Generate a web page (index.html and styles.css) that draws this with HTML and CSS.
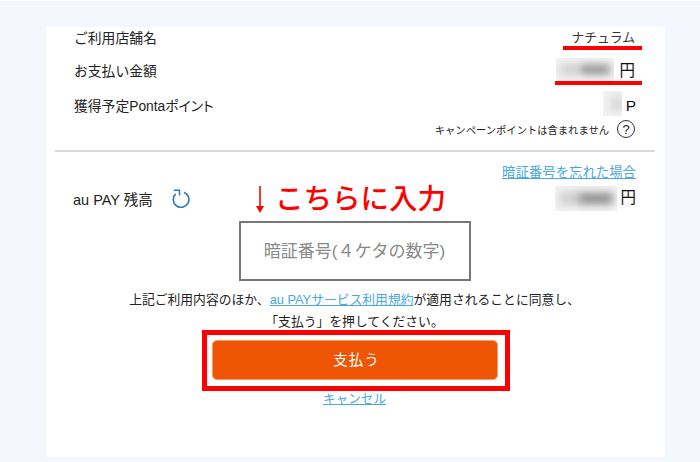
FILE: index.html
```html
<!DOCTYPE html>
<html lang="ja">
<head>
<meta charset="utf-8">
<title>au PAY</title>
<link rel="stylesheet" href="styles.css">
</head>
<body>
<main class="card">
  <section class="summary">
    <div class="row store">
      <span class="label">ご利用店舗名</span>
      <span class="value store-name">ナチュラム</span>
    </div>
    <div class="row amount">
      <span class="label">お支払い金額</span>
      <span class="value amount-value"><i class="blur blur-amount"></i><span class="unit">円</span></span>
    </div>
    <div class="row points">
      <span class="label points-label">獲得予定Pontaポイント</span>
      <span class="value"><i class="blur blur-points"></i><span class="unit unit-p">P</span></span>
    </div>
    <div class="note">
      <span>キャンペーンポイントは含まれません</span>
      <span class="help">?</span>
    </div>
  </section>
  <hr class="divider">
  <section class="payment">
    <div class="forgot"><a href="#">暗証番号を忘れた場合</a></div>
    <div class="balance">
      <div class="balance-left">
        <span class="balance-label">au PAY 残高</span>
        <svg class="refresh" viewBox="0 0 18 19" width="18" height="19" aria-hidden="true">
          <path d="M12 3.3A7.8 7.8 0 1 1 3.6 5" fill="none" stroke="#3b82b8" stroke-width="1.8"/>
          <path d="M1.8 1.4 L7.4 1 L7.6 6.4" fill="none" stroke="#3b82b8" stroke-width="1.6"/>
        </svg>
      </div>
      <div class="hint">
        <svg class="hint-arrow" viewBox="0 0 8 27" width="8" height="27" aria-hidden="true">
          <path d="M4 0V21" stroke="#f00" stroke-width="1.6"/>
          <path d="M0 20H8L4 27Z" fill="#f00"/>
        </svg>
        <span>こちらに入力</span>
      </div>
      <span class="value balance-value"><i class="blur blur-balance"></i><span class="unit">円</span></span>
    </div>
    <div class="pin">暗証番号(４ケタの数字)</div>
    <p class="consent">上記ご利用内容のほか、<a href="#">au PAYサービス利用規約</a>が適用されることに同意し、<br>「支払う」を押してください。</p>
    <div class="highlight"><button class="pay" type="button">支払う</button></div>
    <a class="cancel" href="#">キャンセル</a>
  </section>
</main>
</body>
</html>
```
FILE: styles.css
```css
* { box-sizing: border-box; }
html, body { margin: 0; height: 462px; overflow: hidden; }
body {
  background: #f4f7fe;
  border-top: 1px solid #fff;
  padding: 26px 35px 5px 46px;
  font-family: "Liberation Sans", "Noto Sans CJK JP", sans-serif;
  color: #222;
}
.card { background: #fff; height: 430px; overflow: hidden; }
.summary { padding: 0 29px 0 28px; }
.row { display: flex; justify-content: space-between; font-size: 13.8px; line-height: 20px; }
.store { height: 23px; align-items: flex-start; }
.store .label { margin-top: 2px; }
.store-name { color: #333; border-bottom: 4px solid #f00; margin-right: -6px; padding: 2px 7px 0 8px; height: 23px; font-size: 12.8px; line-height: 18px; }
.amount { height: 27px; margin-top: 8px; align-items: flex-start; }
.amount .label { margin-top: 4px; }
.amount-value { border-bottom: 4px solid #f00; margin-right: -6px; padding: 0 7px 0 1px; height: 27px; align-items: flex-start; }
.amount-value .unit { margin-top: 3px; }
.points { height: 25px; margin-top: 6px; align-items: flex-start; }
.points .label { margin-top: 6px; }
.points-label { font-feature-settings: "palt"; }
.points .unit { margin-top: 5px; }
.value { display: flex; }
.unit { font-size: 15.5px; line-height: 20px; color: #111; }
.unit-p { font-size: 15.5px; }
.blur { display: block; background: #f3f3f3; position: relative; overflow: hidden; }
.blur::before { content: ""; display: block; position: absolute; inset: 6px 36px 6px 4px; background: #cfcfcf; filter: blur(4px); }
.blur::after { content: ""; display: block; position: absolute; inset: 7px 4px 7px 24px; background: #8a8a8a; filter: blur(4px); }
.blur-amount { width: 58px; height: 23px; margin-right: 5px; }
.blur-points { width: 19px; height: 25px; margin-right: 4px; }
.blur-points::before { display: none; }
.blur-points::after { inset: 5px 0 5px 8px; background: #d4d4d4; }
.blur-balance { width: 62px; height: 25px; margin-right: 3px; }
.balance-value { align-items: center; }
.note { display: flex; justify-content: flex-end; align-items: center; gap: 8px; font-size: 10.3px; height: 22px; margin-top: 2px; }
.help { width: 18px; height: 18px; border: 1.5px solid #333; border-radius: 50%; font-size: 13px; display: flex; align-items: center; justify-content: center; margin-right: 1px; }
.divider { border: 0; height: 2px; background: #d9d9d9; margin: 10px 10px 0 9px; }
.payment { padding: 0 29px 0 27px; display: flex; flex-direction: column; align-items: center; }
.forgot { align-self: flex-end; font-size: 13.4px; line-height: 18px; margin-top: 12px; }
a { color: #4aa8e0; text-decoration: underline; }
.balance { align-self: stretch; display: flex; justify-content: space-between; align-items: center; height: 32px; position: relative; }
.balance-left { display: flex; align-items: center; gap: 19px; font-size: 14.5px; }
.refresh { display: block; }
.hint { position: absolute; left: 183px; top: 0; color: #f00; font-size: 28.5px; line-height: 34px; font-weight: 500; white-space: nowrap; display: flex; align-items: center; gap: 11px; }
.pin { width: 232px; height: 60px; margin-top: 7px; padding-bottom: 3px; border: 2px solid #777; display: flex; align-items: center; justify-content: center; color: #888; font-size: 17px; }
.consent { margin: 8px 0 0; text-align: center; font-size: 12.8px; line-height: 21.5px; color: #222; white-space: nowrap; }
.highlight { width: 308px; height: 61px; border: 5px solid #f00; margin: -2px 0 0 3px; padding: 5px 7px 0 5px; background: #fff; flex: none; }
.pay { display: block; width: 286px; height: 40px; margin: 0; padding: 0 0 3px 3px; border: 1px solid #f59a6a; border-radius: 5px; background: #ee5606; color: #fff; font: inherit; font-size: 14.5px; letter-spacing: 1px; }
.cancel { font-size: 12.6px; line-height: 17px; }
```
